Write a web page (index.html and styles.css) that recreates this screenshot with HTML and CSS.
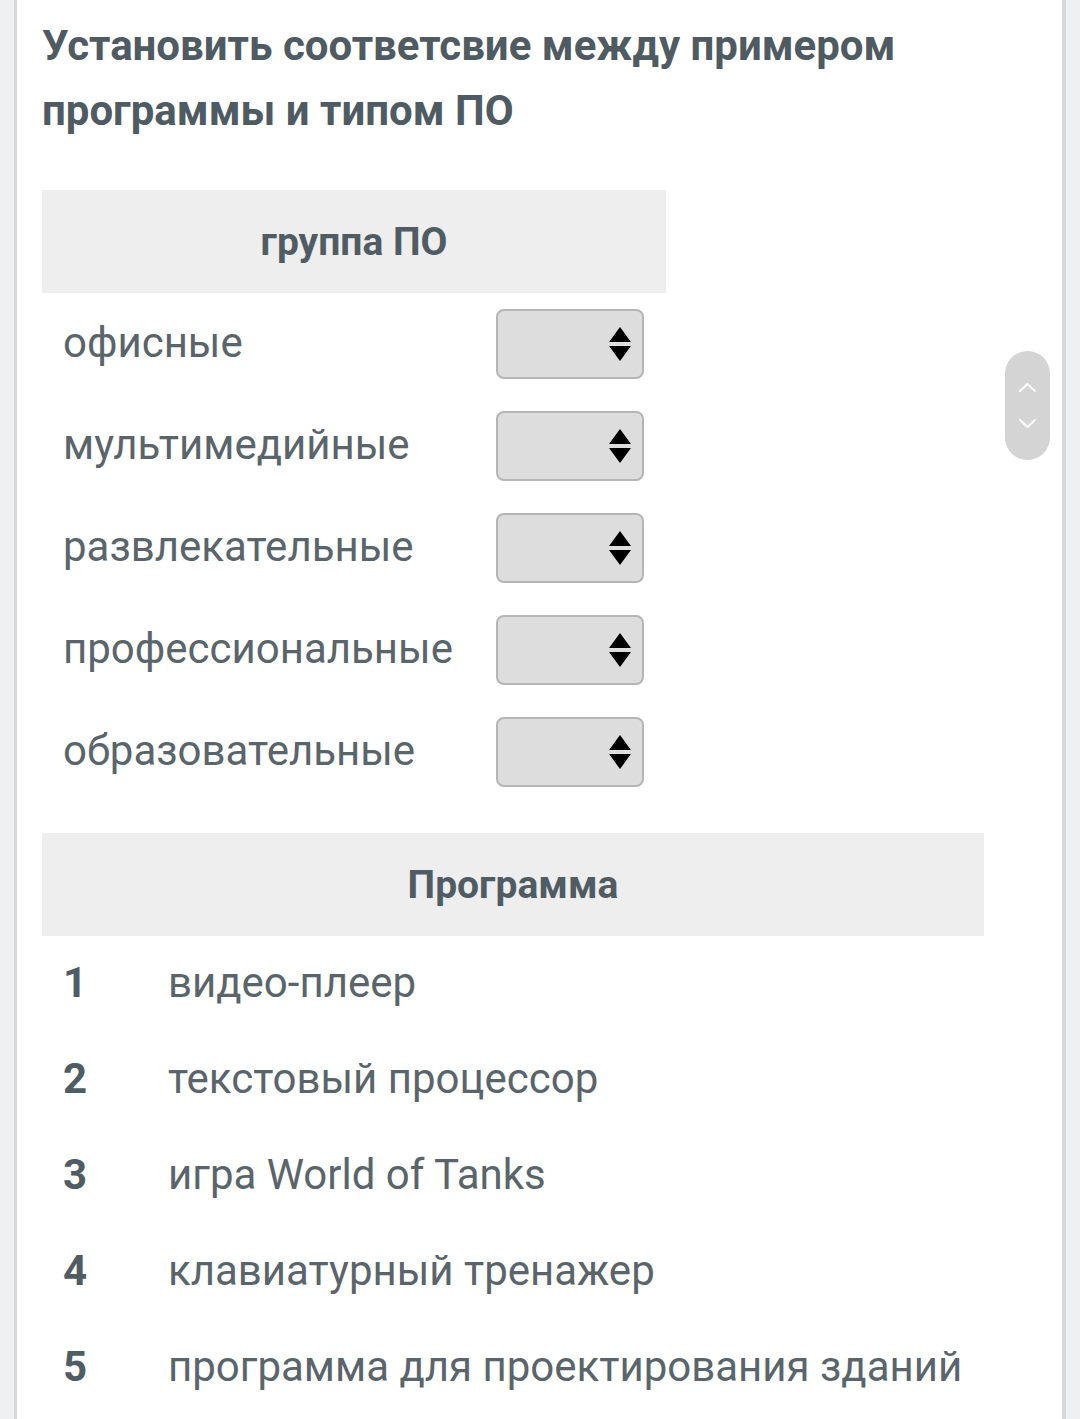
FILE: index.html
```html
<!DOCTYPE html>
<html lang="ru">
<head>
<meta charset="utf-8">
<link rel="stylesheet" href="styles.css">
</head>
<body>
<div class="card">
  <h1 class="title">Установить соответсвие между примером программы и типом ПО</h1>

  <table class="tbl groups">
    <thead><tr><th colspan="2">группа ПО</th></tr></thead>
    <tbody>
      <tr><td class="label">офисные</td><td class="sel-cell"><div class="sel"><svg class="arrows" viewBox="0 0 22 34"><path d="M11 0 L22 15 L0 15 Z M0 19 L22 19 L11 34 Z" fill="#000"/></svg></div></td></tr>
      <tr><td class="label">мультимедийные</td><td class="sel-cell"><div class="sel"><svg class="arrows" viewBox="0 0 22 34"><path d="M11 0 L22 15 L0 15 Z M0 19 L22 19 L11 34 Z" fill="#000"/></svg></div></td></tr>
      <tr><td class="label">развлекательные</td><td class="sel-cell"><div class="sel"><svg class="arrows" viewBox="0 0 22 34"><path d="M11 0 L22 15 L0 15 Z M0 19 L22 19 L11 34 Z" fill="#000"/></svg></div></td></tr>
      <tr><td class="label">профессиональные</td><td class="sel-cell"><div class="sel"><svg class="arrows" viewBox="0 0 22 34"><path d="M11 0 L22 15 L0 15 Z M0 19 L22 19 L11 34 Z" fill="#000"/></svg></div></td></tr>
      <tr><td class="label">образовательные</td><td class="sel-cell"><div class="sel"><svg class="arrows" viewBox="0 0 22 34"><path d="M11 0 L22 15 L0 15 Z M0 19 L22 19 L11 34 Z" fill="#000"/></svg></div></td></tr>
    </tbody>
  </table>

  <table class="tbl programs">
    <thead><tr><th colspan="2">Программа</th></tr></thead>
    <tbody>
      <tr><td class="num">1</td><td class="name">видео-плеер</td></tr>
      <tr><td class="num">2</td><td class="name">текстовый процессор</td></tr>
      <tr><td class="num">3</td><td class="name">игра World of Tanks</td></tr>
      <tr><td class="num">4</td><td class="name">клавиатурный тренажер</td></tr>
      <tr><td class="num">5</td><td class="name">программа для проектирования зданий</td></tr>
    </tbody>
  </table>

  <div class="scroller">
    <svg viewBox="0 0 45 109" width="45" height="109">
      <path d="M15 40 L22.5 33 L30 40" fill="none" stroke="#fff" stroke-width="2" stroke-linecap="round" stroke-linejoin="round"/>
      <path d="M15 69 L22.5 76 L30 69" fill="none" stroke="#fff" stroke-width="2" stroke-linecap="round" stroke-linejoin="round"/>
    </svg>
  </div>
</div>
</body>
</html>
```

FILE: styles.css
```css
html, body {
  margin: 0;
  padding: 0;
}
body {
  background: #eef0f2;
  font-family: Roboto, "Noto Sans", sans-serif;
  color: #525d64;
  height: 1419px;
  overflow: hidden;
}
.card {
  position: relative;
  margin-left: 14px;
  width: 1052px;
  min-height: 1419px;
  background: #fff;
  border-left: 3px solid #d6d8da;
  border-right: 4px solid #d6d8da;
  padding: 13px 0 0 25px;
  box-sizing: border-box;
}
.title {
  margin: 0;
  font-size: 42px;
  line-height: 65px;
  font-weight: 700;
  color: #4f5b62;
  width: 900px;
}
.tbl {
  border-collapse: collapse;
  border-spacing: 0;
}
.tbl th {
  background: #eeeeee;
  height: 103px;
  padding: 0;
  font-size: 39px;
  font-weight: 700;
  text-align: center;
  color: #505c63;
}
.groups {
  margin-top: 47px;
  width: 624px;
}
.groups td {
  height: 102px;
  padding: 0;
}
.groups td.label {
  height: 98px;
  padding: 0 0 4px 21px;
  font-size: 42px;
  color: #5a656b;
}
.sel-cell {
  width: 170px;
}
.sel {
  width: 148px;
  height: 70px;
  box-sizing: border-box;
  background: #dddddd;
  border: 2px solid #b5b5b5;
  border-radius: 8px;
  display: flex;
  align-items: center;
  justify-content: flex-end;
  padding-right: 11px;
}
.arrows {
  width: 22px;
  height: 34px;
}
.programs {
  margin-top: 30px;
  width: 942px;
}
.programs td {
  height: 92px;
  padding: 0 0 4px 0;
  font-size: 42px;
}
.programs td.num {
  width: 126px;
  padding-left: 21px;
  font-weight: 700;
  color: #505c63;
  box-sizing: border-box;
}
.name {
  color: #5a656b;
}
.scroller {
  position: absolute;
  left: 988px;
  top: 351px;
  width: 45px;
  height: 109px;
  border-radius: 23px;
  background: #d4d4d4;
}
.scroller svg {
  display: block;
}
```
